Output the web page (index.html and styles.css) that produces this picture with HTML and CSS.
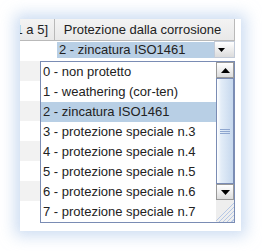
FILE: index.html
```html
<!DOCTYPE html>
<html>
<head>
<meta charset="utf-8">
<link rel="stylesheet" href="styles.css">
</head>
<body>
<div class="frame">
  <div class="table">
    <div class="hdr">
      <div class="hc c1"><span>[da 1 a 5]</span></div>
      <div class="hc c2">Protezione dalla corrosione</div>
    </div>
    <div class="row">
      <div class="cell c1"></div>
      <div class="cell c2 combo">
        <div class="combo-val">2 - zincatura ISO1461</div>
        <div class="combo-btn"><svg width="7" height="4" viewBox="0 0 7 4"><path d="M0 0H7L3.5 4Z" fill="#000"/></svg></div>
      </div>
    </div>
    <div class="row alt"></div>
    <div class="row"></div>
    <div class="row alt"></div>
    <div class="row"></div>
    <div class="row alt"></div>
    <div class="row"></div>
    <div class="row alt"></div>
    <div class="row"></div>
  </div>
  <div class="popup">
    <div class="list">
      <div class="item">0 - non protetto</div>
      <div class="item">1 - weathering (cor-ten)</div>
      <div class="item sel">2 - zincatura ISO1461</div>
      <div class="item">3 - protezione speciale n.3</div>
      <div class="item">4 - protezione speciale n.4</div>
      <div class="item">5 - protezione speciale n.5</div>
      <div class="item">6 - protezione speciale n.6</div>
      <div class="item">7 - protezione speciale n.7</div>
    </div>
    <div class="sb">
      <div class="sb-btn"><svg width="9" height="5" viewBox="0 0 9 5"><path d="M0 5H9L4.5 0Z" fill="#000"/></svg></div>
      <div class="thumb"><div class="grip"></div></div>
      <div class="sb-btn"><svg width="9" height="5" viewBox="0 0 9 5"><path d="M0 0H9L4.5 5Z" fill="#000"/></svg></div>
      <div class="corner"></div>
    </div>
  </div>
</div>
</body>
</html>
```
FILE: styles.css
```css
html, body {
  margin: 0;
  padding: 0;
  background: #fff;
}
body {
  width: 262px;
  height: 251px;
  overflow: hidden;
  font-family: "Liberation Sans", Arial, sans-serif;
  font-size: 13px;
  color: #222;
}
.frame {
  position: relative;
  margin: 19px 0 0 20px;
  width: 221px;
  height: 212px;
  background: #fff;
  box-shadow: 0 0 14px 5px rgba(172, 198, 234, 0.6);
  overflow: hidden;
}
.table {
  width: 215px;
}
.hdr {
  display: flex;
  height: 21px;
  border-bottom: 1px solid #b9b9b9;
  background: linear-gradient(#f3f3f3, #e9e9e9);
}
.hc {
  box-sizing: border-box;
  height: 21px;
  line-height: 21px;
  border-right: 1px solid #b9b9b9;
  white-space: nowrap;
  overflow: hidden;
}
.c1 { width: 35px; flex: none; }
.c2 { width: 180px; flex: none; }
.hdr .c1 {
  display: flex;
  justify-content: flex-end;
  padding-right: 6px;
}
.hdr .c2 {
  text-align: center;
  padding-right: 4px;
}
.row {
  display: flex;
  height: 20px;
  background: #fff;
}
.row.alt {
  background: #f2f2f2;
}
.cell {
  box-sizing: border-box;
  height: 20px;
}
.combo {
  display: flex;
  padding: 1px 0 3px 2px;
}
.combo-val {
  flex: 1;
  background: #b8cfe5;
  line-height: 15px;
  padding-left: 2px;
}
.combo-btn {
  box-sizing: border-box;
  width: 21px;
  height: 17px;
  margin-top: -1px;
  padding-right: 6px;
  border: 1px solid #c3cbd8;
  background: linear-gradient(#ffffff, #dcdcdc);
  display: flex;
  align-items: center;
  justify-content: center;
}
.popup {
  position: absolute;
  left: 20px;
  top: 42px;
  width: 195px;
  height: 162px;
  box-sizing: border-box;
  border: 1px solid #7a8cb4;
  background: #fff;
  display: flex;
}
.list {
  flex: 1;
}
.item {
  height: 20px;
  line-height: 20px;
  padding-left: 2px;
  white-space: nowrap;
  overflow: hidden;
}
.item.sel {
  background: #b8cfe5;
}
.sb {
  width: 18px;
  display: flex;
  flex-direction: column;
  background: #eeeeee;
}
.sb-btn {
  box-sizing: border-box;
  height: 16px;
  border: 1px solid #999;
  background: linear-gradient(#ffffff, #dcdcdc);
  display: flex;
  align-items: center;
  justify-content: center;
}
.thumb {
  box-sizing: border-box;
  height: 106px;
  border: 1px solid #7a8cb4;
  background: linear-gradient(90deg, #ffffff 0, #e3edf8 25%, #c6d8ee 100%);
  display: flex;
  align-items: center;
  justify-content: center;
}
.grip {
  width: 10px;
  height: 5px;
  background: repeating-linear-gradient(#8ea6cf 0 1px, transparent 1px 2px);
}
.corner {
  flex: 1;
  background:
    linear-gradient(135deg, #eeeeee 52%, transparent 52%),
    repeating-linear-gradient(135deg, #eeeeee 0 2px, #b6c8e6 2px 3px);
}
```
